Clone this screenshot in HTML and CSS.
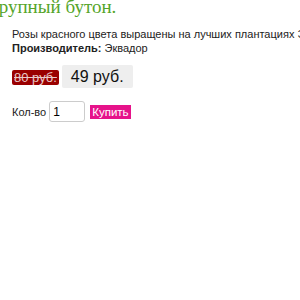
FILE: index.html
```html
<!DOCTYPE html>
<html lang="ru">
<head>
  <meta charset="UTF-8" />
  <title>Крупный бутон</title>
  <link rel="stylesheet" href="styles.css">
</head>
<body>

  <h1 class="titre">Крупный бутон.</h1>

  <div class="fiche">
    <p class="desc">Розы красного цвета выращены на лучших плантациях Эквадора.<br>
      <b>Производитель:</b> Эквадор</p>

    <div class="prix">
      <span class="prix-ancien">80 руб.</span>
      <span class="prix-nouveau">49 руб.</span>
    </div>

    <div class="achat">
      <label for="qte">Кол-во</label>
      <input type="text" id="qte" value="1" />
      <button class="btn-acheter">Купить</button>
    </div>
  </div>

</body>
</html>
```

FILE: styles.css
```css
body {
  font-family: "Liberation Sans", Arial, sans-serif;
  background-color: #ffffff;
  color: #222222;
  margin: 0;
  overflow: hidden;
  white-space: nowrap;
}

/* Titre vert */
.titre {
  font-family: "Liberation Serif", "Times New Roman", serif;
  font-weight: normal;
  font-size: 19px;
  color: #55a52a;
  margin: -5px 0 0 -14px;
  line-height: 24px;
}

.fiche {
  padding: 0 12px;
}

.desc {
  font-size: 11px;
  line-height: 14px;
  margin: 8px 0 0;
}

/* Prix */
.prix {
  display: flex;
  align-items: baseline;
  gap: 3px;
  margin-top: 10px;
}

.prix-ancien {
  background-color: #9a0000;
  color: #e8c8c8;
  text-decoration: line-through;
  font-size: 13px;
  line-height: 15px;
  padding: 0 2px;
  border-radius: 2px;
}

.prix-nouveau {
  background-color: #eeeeee;
  color: #111111;
  font-size: 16px;
  line-height: 23px;
  padding: 0 9px;
  border-radius: 2px;
}

/* Quantité + bouton */
.achat {
  display: flex;
  align-items: center;
  gap: 3px;
  margin-top: 13px;
  font-size: 11px;
}

.achat input {
  width: 36px;
  height: 21px;
  box-sizing: border-box;
  border: 1px solid #cccccc;
  border-radius: 3px;
  padding: 2px 3px;
  font-family: inherit;
  font-size: 12px;
}

.btn-acheter {
  background-color: #e6138a;
  color: #ffffff;
  border: none;
  font-family: inherit;
  font-size: 11.5px;
  line-height: 14px;
  padding: 0 2px;
  margin-left: 2px;
  cursor: pointer;
}
```
